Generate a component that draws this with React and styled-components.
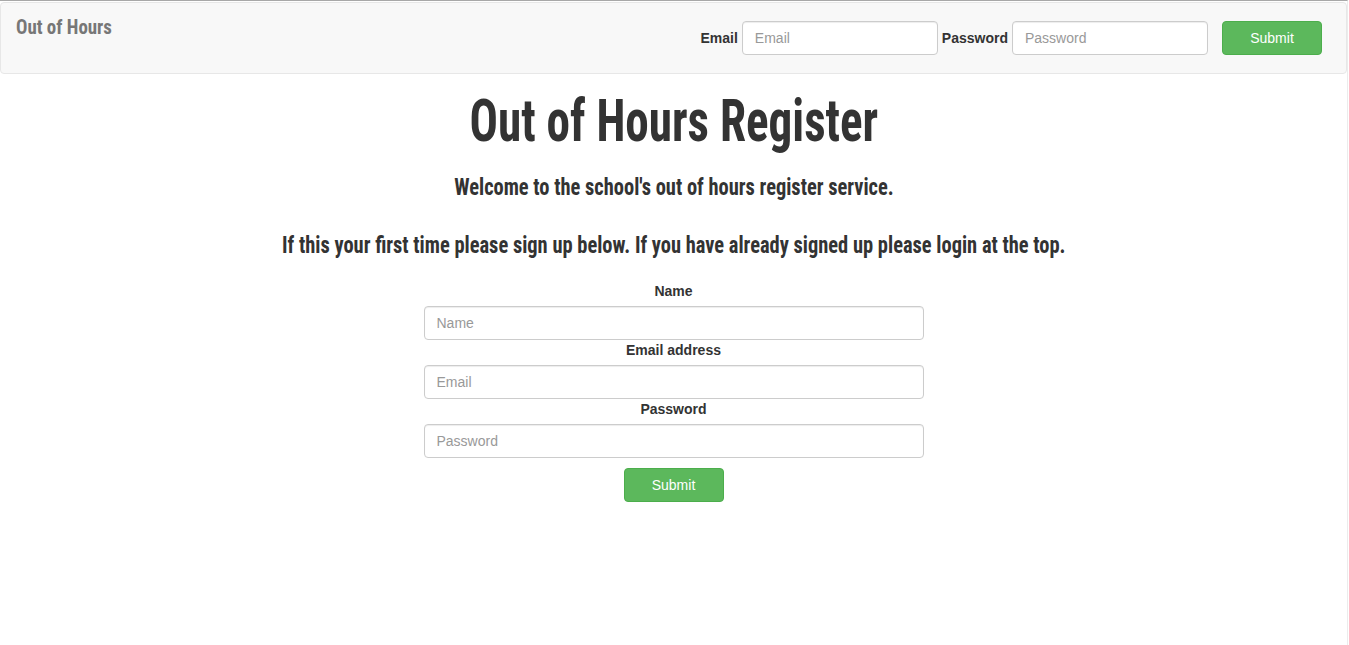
import React from "react";
import styled, { createGlobalStyle } from "styled-components";

const Global = createGlobalStyle`
  html, body { margin: 0; padding: 0; background: #fff; }
  body {
    font-family: "Liberation Sans", Arial, sans-serif;
    font-size: 14px;
    color: #333;
  }
  * { box-sizing: border-box; }
`;

const display = `Roboto, "DejaVu Sans Condensed", sans-serif`;

const Page = styled.div`
  width: calc(100% - 1px);
  min-height: 645px;
  border-top: 1px solid #a8a8a8;
  border-right: 1px solid #ececec;
  padding-top: 1px;
`;

const Navbar = styled.nav`
  display: flex;
  align-items: flex-start;
  justify-content: space-between;
  height: 72px;
  background: #f8f8f8;
  border: 1px solid #e7e7e7;
  border-radius: 4px;
`;

const Condensed = styled.span`
  display: inline-block;
  font-family: ${display};
  font-stretch: 75%;
  font-weight: 700;
  white-space: nowrap;
  transform: scaleX(${(p) => p.$k || 0.8});
  transform-origin: ${(p) => p.$origin || "center"};
`;

const Brand = styled.a`
  font-size: 21px;
  line-height: 20px;
  color: #777;
  padding: 14px 15px;
  text-decoration: none;
`;

const NavForm = styled.form`
  display: flex;
  align-items: center;
  margin: 8px 0;
  padding: 10px 24px 10px 15px;
`;

const InlineLabel = styled.label`
  font-weight: bold;
  font-size: 14px;
  color: #333;
  margin-right: 4px;
  margin-left: ${(p) => p.$ml || 0}px;
`;

const Input = styled.input`
  display: block;
  width: ${(p) => p.$w || "100%"};
  height: 34px;
  padding: 6px 12px;
  font-family: "Liberation Sans", Arial, sans-serif;
  font-size: 14px;
  color: #555;
  background: #fff;
  border: 1px solid #ccc;
  border-radius: 4px;
  box-shadow: inset 0 1px 1px rgba(0, 0, 0, 0.075);
  outline: none;
  &::placeholder { color: #999; }
`;

const Button = styled.button`
  width: 100px;
  height: 34px;
  margin-left: ${(p) => p.$ml || 0}px;
  margin-top: ${(p) => p.$mt || 0}px;
  background: #5cb85c;
  border: 1px solid #4cae4c;
  border-radius: 4px;
  color: #fff;
  font-family: "Liberation Sans", Arial, sans-serif;
  font-size: 14px;
  cursor: pointer;
`;

const Main = styled.main`
  display: flex;
  flex-direction: column;
  align-items: center;
  text-align: center;
`;

const Title = styled.h1`
  font-size: 60px;
  line-height: 66px;
  font-weight: 700;
  color: #333;
  margin: 14px 0 0;
`;

const Lead = styled.h3`
  font-size: 24px;
  line-height: 26px;
  font-weight: 700;
  color: #333;
  margin: ${(p) => p.$mt}px 0 0;
`;

const SignupForm = styled.form`
  width: 500px;
  margin-top: 23px;
  display: flex;
  flex-direction: column;
  align-items: center;
`;

const FieldLabel = styled.label`
  display: block;
  font-weight: bold;
  font-size: 14px;
  line-height: 20px;
  color: #333;
  margin-bottom: 5px;
`;

export default function App() {
  return (
    <>
      <Global />
      <Page>
        <Navbar>
          <Brand href="#">
            <Condensed $k={0.9} $origin="left">Out of Hours</Condensed>
          </Brand>
          <NavForm onSubmit={(e) => e.preventDefault()}>
            <InlineLabel>Email</InlineLabel>
            <Input $w="196px" type="email" placeholder="Email" />
            <InlineLabel $ml={4}>Password</InlineLabel>
            <Input $w="196px" type="password" placeholder="Password" />
            <Button $ml={14} type="submit">Submit</Button>
          </NavForm>
        </Navbar>
        <Main>
          <Title>
            <Condensed $k={0.786}>Out of Hours Register</Condensed>
          </Title>
          <Lead $mt={20}>
            <Condensed $k={0.852}>Welcome to the school's out of hours register service.</Condensed>
          </Lead>
          <Lead $mt={32}>
            <Condensed $k={0.852}>
              If this your first time please sign up below. If you have already signed up please login at the top.
            </Condensed>
          </Lead>
          <SignupForm onSubmit={(e) => e.preventDefault()}>
            <FieldLabel>Name</FieldLabel>
            <Input type="text" placeholder="Name" />
            <FieldLabel>Email address</FieldLabel>
            <Input type="email" placeholder="Email" />
            <FieldLabel>Password</FieldLabel>
            <Input type="password" placeholder="Password" />
            <Button $mt={10} type="submit">Submit</Button>
          </SignupForm>
        </Main>
      </Page>
    </>
  );
}
